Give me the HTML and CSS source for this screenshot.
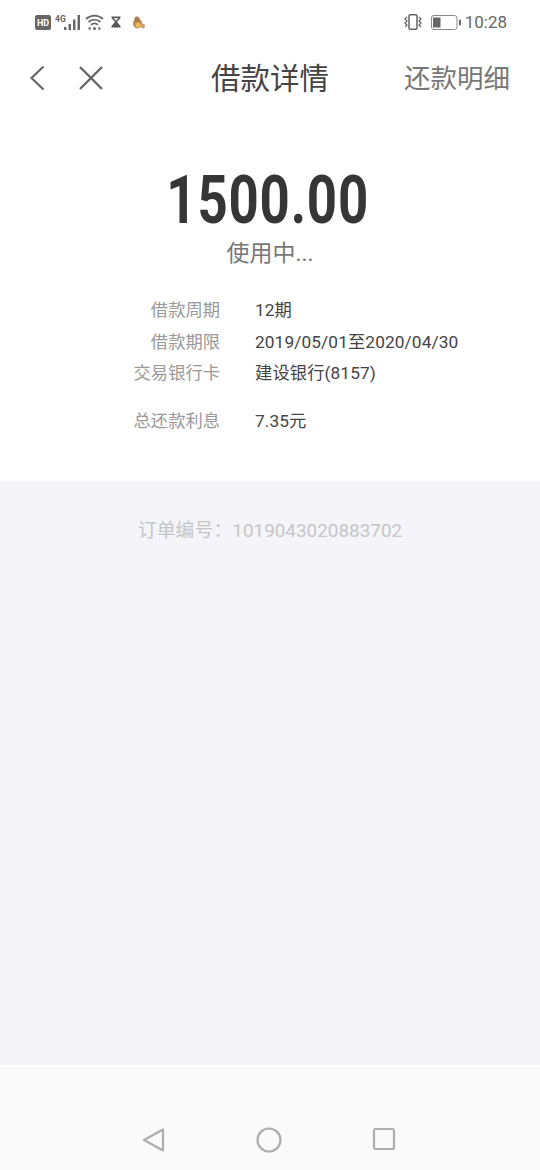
FILE: index.html
```html
<!DOCTYPE html>
<html lang="zh">
<head>
<meta charset="utf-8">
<title>借款详情</title>
<link rel="stylesheet" href="styles.css">
</head>
<body>
<div class="app">
  <div class="top">
    <div class="status">
      <div class="status-left">
        <svg class="i-hd" width="16" height="15" viewBox="0 0 16 15"><rect width="16" height="15" rx="2" fill="#666"/><text x="8" y="11" class="hd-text">HD</text></svg>
        <svg class="i-sig" width="26" height="17" viewBox="0 0 26 17"><text x="0" y="7.500" class="sig-text">4G</text><g fill="#666"><rect x="9" y="13" width="2.500" height="3"/><rect x="13.500" y="10" width="2.500" height="6"/><rect x="18" y="5.500" width="2.500" height="10.500"/><rect x="22.500" y="1" width="2.500" height="15"/></g></svg>
        <svg class="i-wifi" width="19" height="17" viewBox="0 0 19 17"><g fill="none" stroke="#666" stroke-width="1.700"><path d="M1 5C6 0.500 13 0.500 18 5"/><path d="M3.500 8C7 5 12 5 15.500 8"/><path d="M6 10.700C8 9.200 11 9.200 13 10.700"/></g><circle cx="9.500" cy="14.500" r="1.500" fill="#666"/><path d="M3 14.500L5.500 12.500V16.500ZM16 14.500L13.500 12.500V16.500Z" fill="#666"/></svg>
        <svg class="i-glass" width="10" height="12" viewBox="0 0 10 12"><path d="M0.500 0.500H9.500V2L6 6L9.500 10V11.500H0.500V10L4 6L0.500 2Z" fill="#555"/><path d="M2.500 2H7.500L5 5Z" fill="#ddd"/></svg>
        <svg class="i-beaver" width="13" height="13" viewBox="0 0 13 13"><ellipse cx="5.500" cy="7.500" rx="4.500" ry="5" fill="#b98a5c"/><circle cx="5" cy="3.200" r="2.600" fill="#a87a50"/><ellipse cx="11" cy="10" rx="2" ry="2.500" fill="#c9a06d"/><circle cx="6" cy="9" r="2.500" fill="#ecc04a"/></svg>
      </div>
      <div class="status-right">
        <svg class="i-vib" width="18" height="16" viewBox="0 0 18 16"><rect x="5" y="0.800" width="8" height="14.400" rx="1.200" fill="none" stroke="#666" stroke-width="1.500"/><path d="M3 3L1 5L3 7L1 9L3 11L1 13M15 3L17 5L15 7L17 9L15 11L17 13" fill="none" stroke="#666" stroke-width="1.200"/></svg>
        <svg class="i-bat" width="30" height="15" viewBox="0 0 30 15"><rect x="0.500" y="0.500" width="25.500" height="14" rx="2.500" fill="none" stroke="#888"/><rect x="2" y="2.500" width="7.500" height="10" fill="#666"/><rect x="28" y="4.500" width="2" height="6" rx="1" fill="#666"/></svg>
        <span class="time">10:28</span>
      </div>
    </div>
    <div class="nav">
      <div class="nav-icons">
        <svg width="16" height="26" viewBox="0 0 16 26"><path d="M14.500 1.500L2.500 13L14.500 24.500" fill="none" stroke="#666" stroke-width="2.200"/></svg>
        <svg width="24" height="24" viewBox="0 0 24 24"><path d="M1 1L23 23M23 1L1 23" fill="none" stroke="#666" stroke-width="2.400"/></svg>
      </div>
      <h1 class="title">借款详情</h1>
      <span class="nav-link">还款明细</span>
    </div>
  </div>

  <section class="card">
    <div class="amount">1500.00</div>
    <div class="state">使用中...</div>
    <dl class="rows">
      <div class="row"><dt>借款周期</dt><dd>12期</dd></div>
      <div class="row"><dt>借款期限</dt><dd>2019/05/01至2020/04/30</dd></div>
      <div class="row"><dt>交易银行卡</dt><dd>建设银行(8157)</dd></div>
      <div class="row row-gap"><dt>总还款利息</dt><dd>7.35元</dd></div>
    </dl>
  </section>

  <main class="rest">
    <p class="order">订单编号：1019043020883702</p>
  </main>

  <footer class="softkeys">
    <svg width="24" height="26" viewBox="0 0 24 26"><path d="M2 13L21 2.500V23.500Z" fill="none" stroke="#aeaeae" stroke-width="2.200" stroke-linejoin="round"/></svg>
    <svg width="26" height="26" viewBox="0 0 26 26"><circle cx="13" cy="13" r="11.500" fill="none" stroke="#aeaeae" stroke-width="2.200"/></svg>
    <svg width="24" height="24" viewBox="0 0 24 24"><rect x="2" y="2" width="20" height="20" rx="1.500" fill="none" stroke="#aeaeae" stroke-width="2.200"/></svg>
  </footer>
</div>
</body>
</html>
```

FILE: styles.css
```css
* { box-sizing: border-box; }
html, body { margin: 0; padding: 0; }
body {
  width: 540px;
  height: 1170px;
  overflow: hidden;
  font-family: Roboto, "Noto Sans CJK SC", sans-serif;
  background: #f4f4f9;
}
.app { display: flex; flex-direction: column; height: 1170px; }
.top { background: #fff; }
.status {
  height: 44px;
  padding: 0 33px 0 35px;
  display: flex;
  justify-content: space-between;
  align-items: center;
}
.status-left { display: flex; align-items: center; gap: 4px; }
.status-right { display: flex; align-items: center; }
.hd-text { font: 700 9px Roboto, sans-serif; fill: #fff; text-anchor: middle; }
.sig-text { font: 700 8.500px Roboto, sans-serif; fill: #666; }
.i-glass { margin-left: 3px; }
.i-beaver { margin-left: 7px; }
.i-vib { margin-right: 9px; }
.i-bat { margin-right: 4px; }
.time { font-size: 17px; color: #666; }
.nav {
  height: 65px;
  padding: 0 30px 0 29px;
  display: flex;
  align-items: center;
  position: relative;
  justify-content: space-between;
}
.nav-icons { display: flex; align-items: center; gap: 34px; margin-top: 3px; }
.title {
  margin: 0 0 2px;
  font-size: 29.500px;
  font-weight: 400;
  color: #444;
  position: absolute;
  left: 0;
  right: 0;
  text-align: center;
  pointer-events: none;
}
.nav-link { font-size: 26.500px; color: #777; }
.card {
  background: #fff;
  height: 372px;
  padding-top: 54px;
  display: flex;
  flex-direction: column;
  align-items: center;
}
.amount {
  font-size: 66px;
  line-height: 76px;
  font-weight: 700;
  letter-spacing: 1px;
  color: #363636;
  margin-right: 4px;
  transform: scaleX(0.8);
}
.state { font-size: 23px; line-height: 32px; margin-top: -1px; color: #777; }
.rows { margin: 23px 0 0; width: 100%; }
.row { display: flex; height: 31.500px; align-items: center; font-size: 17.300px; }
.row-gap { margin-top: 16px; }
.row dt { width: 220px; text-align: right; color: #999; }
.row dd { margin: 0 0 0 35px; color: #444; letter-spacing: 0.1px; }
.rest { flex: 1; background: #f4f4f9; padding-top: 35px; }
.order { margin: 0; text-align: center; font-size: 18.900px; line-height: 30px; color: #c6c6c9; }
.softkeys {
  height: 105px;
  background: #fafafa;
  display: flex;
  justify-content: center;
  gap: 90px;
  padding: 62px 2px 0 0;
  align-items: flex-start;
}
```
